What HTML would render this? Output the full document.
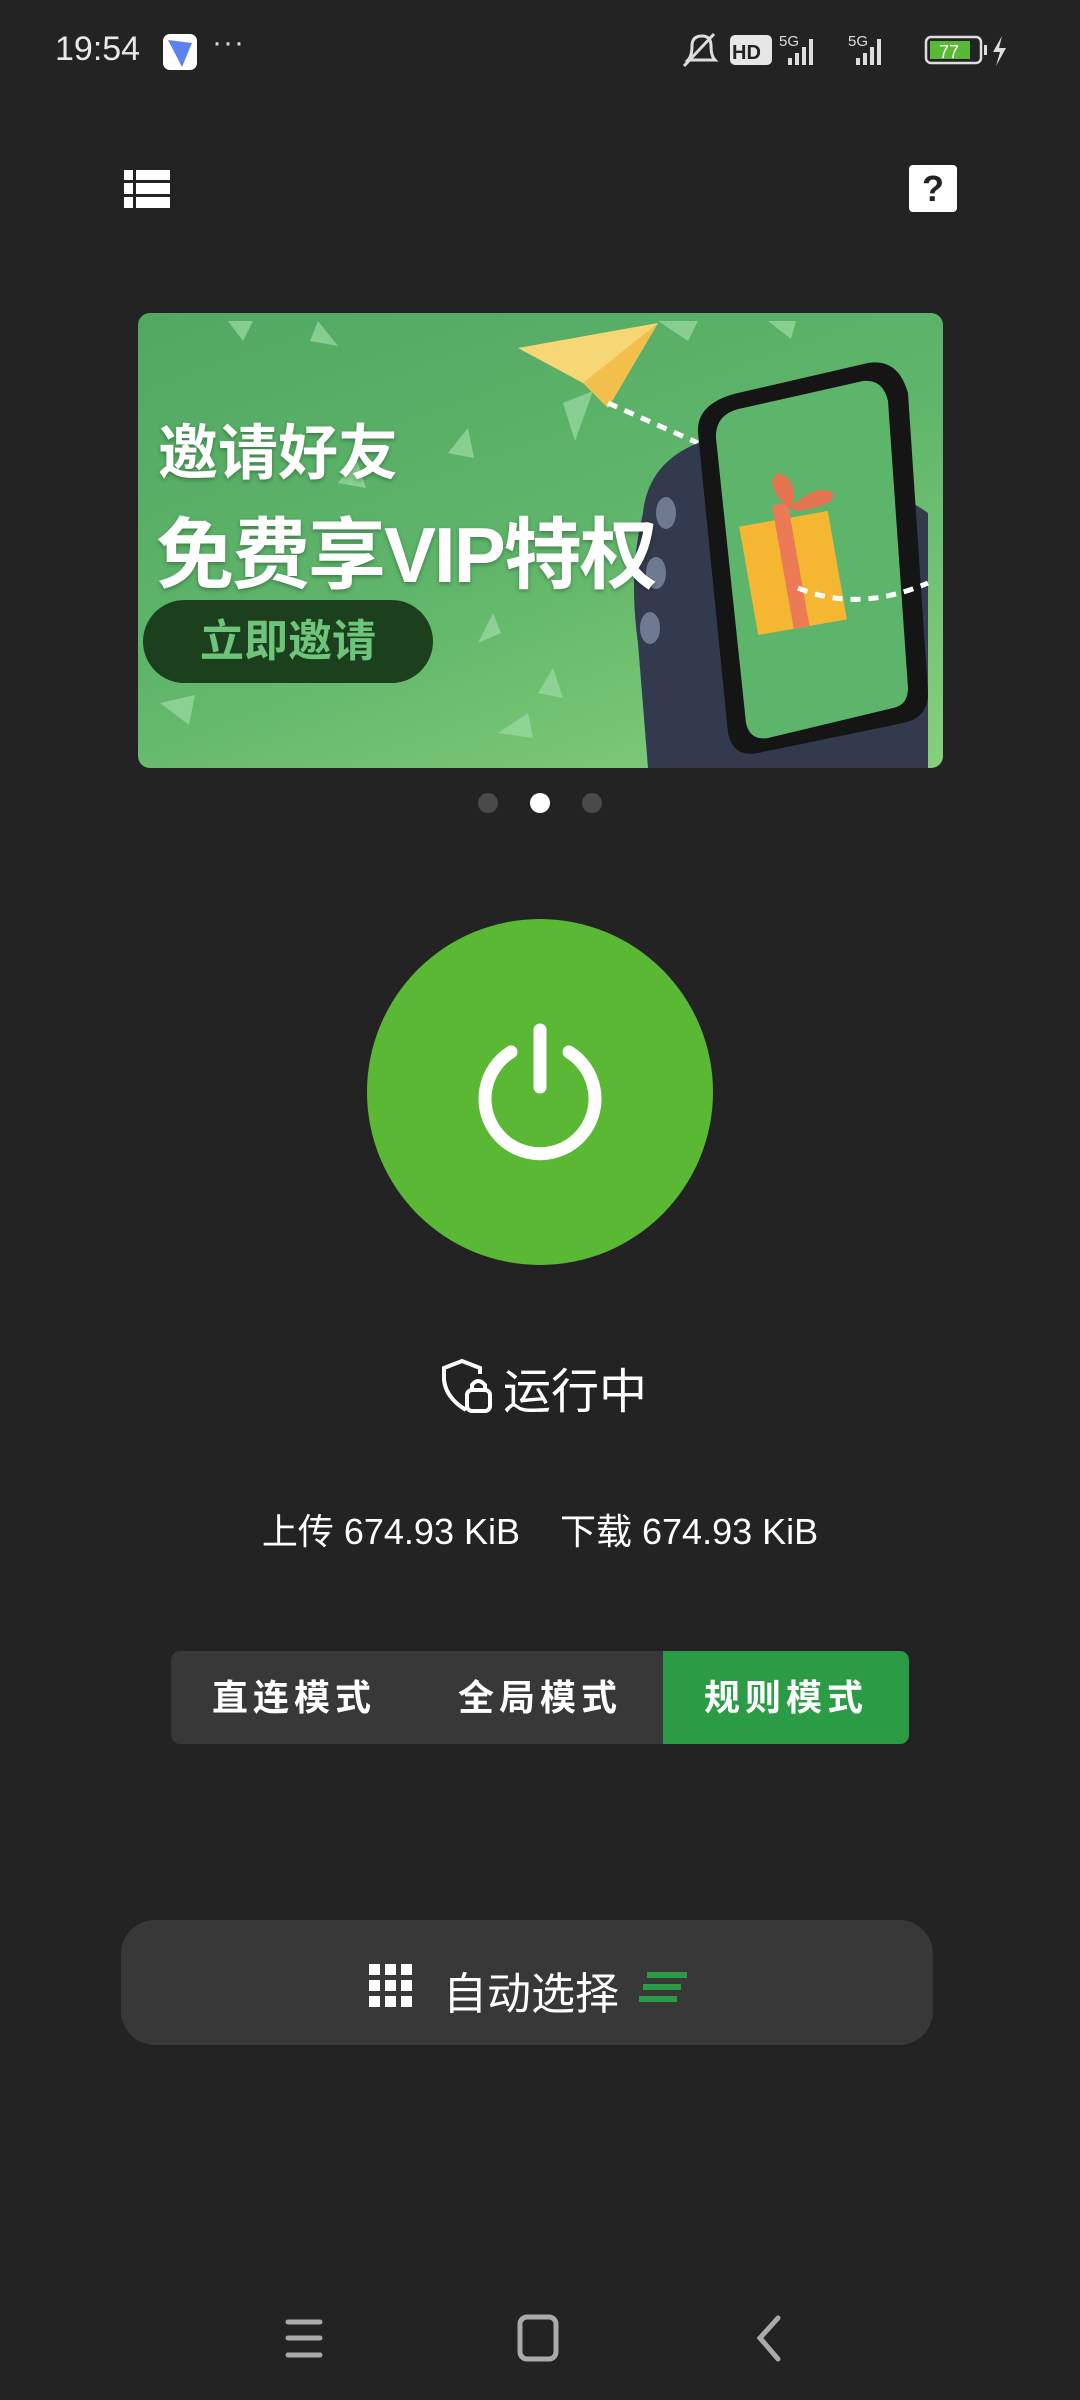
<!DOCTYPE html>
<html><head><meta charset="utf-8"><style>
*{margin:0;padding:0;box-sizing:border-box}
html,body{width:1080px;height:2400px;background:#232323;overflow:hidden;font-family:"Liberation Sans","Noto Sans CJK SC",sans-serif;color:#fff}
.abs{position:absolute}
</style></head><body>
<!-- status bar -->
<div class="abs" style="left:55px;top:30px;font-size:34px;color:#e8e8e8">19:54</div>
<div class="abs" style="left:163px;top:34px;width:34px;height:36px;background:#fff;border-radius:7px"></div>
<svg class="abs" style="left:163px;top:34px" width="34" height="36"><path d="M5 6 L29 9 L19 33 Z" fill="#5a83f0"/></svg>
<div class="abs" style="left:212px;top:26px;font-size:30px;color:#ddd;letter-spacing:1px">···</div>
<svg class="abs" style="left:680px;top:30px" width="340" height="42">
<g stroke="#ddd" stroke-width="3" fill="none"><path d="M8 30 Q12 26 12 16 Q12 6 22 6 Q31 6 31 16 Q31 26 35 30 Z"/><path d="M4 36 L34 4"/></g>
<rect x="50" y="5" width="42" height="30" rx="5" fill="#e6e6e6"/><text x="52" y="29" font-size="20" font-weight="bold" fill="#222" font-family="Liberation Sans">HD</text>
<text x="99" y="16" font-size="15" fill="#ddd" font-family="Liberation Sans">5G</text>
<g fill="#ddd"><rect x="108" y="28" width="4" height="7"/><rect x="115" y="23" width="4" height="12"/><rect x="122" y="17" width="4" height="18"/><rect x="129" y="9" width="4" height="26"/></g>
<text x="168" y="16" font-size="15" fill="#ddd" font-family="Liberation Sans">5G</text>
<g fill="#ddd"><rect x="176" y="28" width="4" height="7"/><rect x="183" y="23" width="4" height="12"/><rect x="190" y="17" width="4" height="18"/><rect x="197" y="9" width="4" height="26"/></g>
<rect x="246" y="7" width="55" height="26" rx="5" fill="none" stroke="#ddd" stroke-width="2.5"/><rect x="250" y="11" width="40" height="18" fill="#5ab835"/><text x="259" y="28" font-size="18" fill="#fff" font-family="Liberation Sans">77</text>
<rect x="304" y="15" width="3" height="10" fill="#ddd"/>
<path d="M322 6 L313 22 L320 22 L316 36 L326 18 L319 18 Z" fill="#ddd"/>
</svg>
<!-- top icons -->
<svg class="abs" style="left:124px;top:170px" width="46" height="38"><g fill="#fff"><rect x="0" y="0" width="9" height="10"/><rect x="12" y="0" width="34" height="10"/><rect x="0" y="13" width="9" height="11"/><rect x="12" y="13" width="34" height="11"/><rect x="0" y="27" width="9" height="11"/><rect x="12" y="27" width="34" height="11"/></g></svg>
<div class="abs" style="left:909px;top:165px;width:48px;height:47px;background:#fff;border-radius:4px;color:#222;font-size:36px;font-weight:bold;text-align:center;line-height:47px">?</div>
<!-- banner -->
<div class="abs" style="left:138px;top:313px;width:805px;height:455px;border-radius:12px;overflow:hidden;background:linear-gradient(160deg,#52a862 0%,#5fb56a 50%,#86d07c 100%)">
<svg width="805" height="455" style="position:absolute;left:0;top:0">
<g fill="#9bdca4" opacity="0.7"><path d="M90 8 l25 0 l-10 20z"/><path d="M180 8 l20 25 l-28 -5z"/><path d="M360 420 l30 -20 l5 25z"/><path d="M22 390 l35 -8 l-6 30z"/><path d="M200 170 l18 -25 l10 30z"/><path d="M310 140 l20 -25 l6 30z"/><path d="M250 330 l30 -12 l-3 22z"/><path d="M400 380 l15 -25 l10 30z"/><path d="M520 8 l40 0 l-10 20z"/><path d="M630 8 l28 0 l-5 18z"/><path d="M340 330 l15 -30 l8 20z"/><path d="M425 90 l30 -12 l-18 50z"/></g>
<path d="M380 35 L520 10 L470 95 L445 70 Z" fill="#f6d675"/><path d="M445 70 L470 95 L520 10 Z" fill="#f2bf4c"/>
<path d="M470 90 L560 130" stroke="#fff" stroke-width="5" stroke-dasharray="10 8" fill="none"/>
<path d="M560 130 Q510 150 505 200 Q490 260 500 330 L510 455 L790 455 L790 200 Q720 150 650 170 Z" fill="#343a4d"/>
<path d="M600 80 L730 50 Q760 45 770 80 L790 380 Q790 405 765 410 L620 440 Q595 445 590 420 L560 120 Q558 90 600 80 Z" fill="#151515"/>
<path d="M605 95 L725 68 Q745 66 750 88 L770 375 Q770 392 755 395 L630 425 Q612 428 608 410 L578 125 Q577 100 605 95 Z" fill="#5db56b"/>
<rect x="610" y="205" width="90" height="110" fill="#f5b731" transform="rotate(-10 655 260)"/>
<rect x="646" y="190" width="16" height="125" fill="#ec7b55" transform="rotate(-10 655 260)"/>
<path d="M650 195 Q625 170 640 160 Q660 165 655 192 Q680 170 695 180 Q700 192 660 198Z" fill="#e2744f"/>
<path d="M660 275 Q720 300 790 270" stroke="#fff" stroke-width="5" stroke-dasharray="10 8" fill="none"/>
<g fill="#6f7a90"><ellipse cx="528" cy="200" rx="10" ry="16"/><ellipse cx="518" cy="260" rx="10" ry="16"/><ellipse cx="512" cy="315" rx="10" ry="16"/></g>
</svg>
<div class="abs" style="left:20px;top:92px;font-size:60px;font-weight:bold;text-shadow:0 2px 4px rgba(0,0,0,.3)">邀请好友</div>
<div class="abs" style="left:18px;top:180px;font-size:78px;font-weight:bold;text-shadow:0 2px 4px rgba(0,0,0,.3);letter-spacing:-2px">免费享VIP特权</div>
<div class="abs" style="left:5px;top:287px;width:290px;height:83px;border-radius:42px;background:#1c3f1e;color:#6dc47a;font-size:44px;font-weight:bold;text-align:center;line-height:83px">立即邀请</div>
</div>
<!-- dots -->
<div class="abs" style="left:478px;top:793px;width:20px;height:20px;border-radius:50%;background:#4a4a4a"></div>
<div class="abs" style="left:530px;top:793px;width:20px;height:20px;border-radius:50%;background:#fff"></div>
<div class="abs" style="left:582px;top:793px;width:20px;height:20px;border-radius:50%;background:#4a4a4a"></div>
<!-- power -->
<div class="abs" style="left:367px;top:919px;width:346px;height:346px;border-radius:50%;background:#5ab835"></div>
<svg class="abs" style="left:440px;top:1000px" width="200" height="190"><g stroke="#fff" stroke-width="13" stroke-linecap="round" fill="none"><path d="M100 30 V87"/><path d="M71 52 A55 55 0 1 0 129 52"/></g></svg>
<!-- status -->
<svg class="abs" style="left:440px;top:1358px" width="60" height="58"><g stroke="#fff" stroke-width="4" fill="none"><path d="M26 52 Q6 40 4 22 L4 10 L22 3 L40 10 L40 16"/><rect x="27" y="32" width="23" height="21" rx="5"/><path d="M32 32 V27 Q38 19 45 27 V32"/></g></svg>
<div class="abs" style="left:503px;top:1352px;font-size:48px">运行中</div>
<div class="abs" style="left:0;width:1080px;top:1503px;text-align:center;font-size:36px">上传 674.93 KiB&nbsp;&nbsp;&nbsp;&nbsp;下载 674.93 KiB</div>
<!-- segmented -->
<div class="abs" style="left:171px;top:1651px;width:738px;height:93px;border-radius:9px;background:#383838;overflow:hidden;font-size:36px;font-weight:bold;letter-spacing:5px">
<div class="abs" style="left:0;width:246px;top:0;height:93px;line-height:93px;text-align:center">直连模式</div>
<div class="abs" style="left:246px;width:246px;top:0;height:93px;line-height:93px;text-align:center">全局模式</div>
<div class="abs" style="left:492px;width:246px;top:0;height:93px;line-height:93px;text-align:center;background:#2c9b46">规则模式</div>
</div>
<!-- auto select -->
<div class="abs" style="left:121px;top:1920px;width:812px;height:125px;border-radius:34px;background:#383838"></div>
<svg class="abs" style="left:369px;top:1964px" width="44" height="44"><g fill="#fff"><rect x="0" y="0" width="11" height="11"/><rect x="16" y="0" width="11" height="11"/><rect x="32" y="0" width="11" height="11"/><rect x="0" y="16" width="11" height="11"/><rect x="16" y="16" width="11" height="11"/><rect x="32" y="16" width="11" height="11"/><rect x="0" y="32" width="11" height="11"/><rect x="16" y="32" width="11" height="11"/><rect x="32" y="32" width="11" height="11"/></g></svg>
<div class="abs" style="left:443px;top:1958px;font-size:44px">自动选择</div>
<svg class="abs" style="left:639px;top:1972px" width="50" height="32"><g fill="#2c9b46"><rect x="8" y="0" width="40" height="6"/><rect x="4" y="12" width="38" height="6"/><rect x="0" y="24" width="38" height="6"/></g></svg>
<!-- nav -->
<svg class="abs" style="left:0;top:2292px" width="1080" height="100"><g stroke="#aaa" stroke-width="5" stroke-linecap="round" fill="none"><path d="M288 30 H320 M288 46 H320 M288 63 H320"/><rect x="520" y="25" width="36" height="42" rx="7"/><path d="M778 26 L760 46 L778 67"/></g></svg>
</body></html>
